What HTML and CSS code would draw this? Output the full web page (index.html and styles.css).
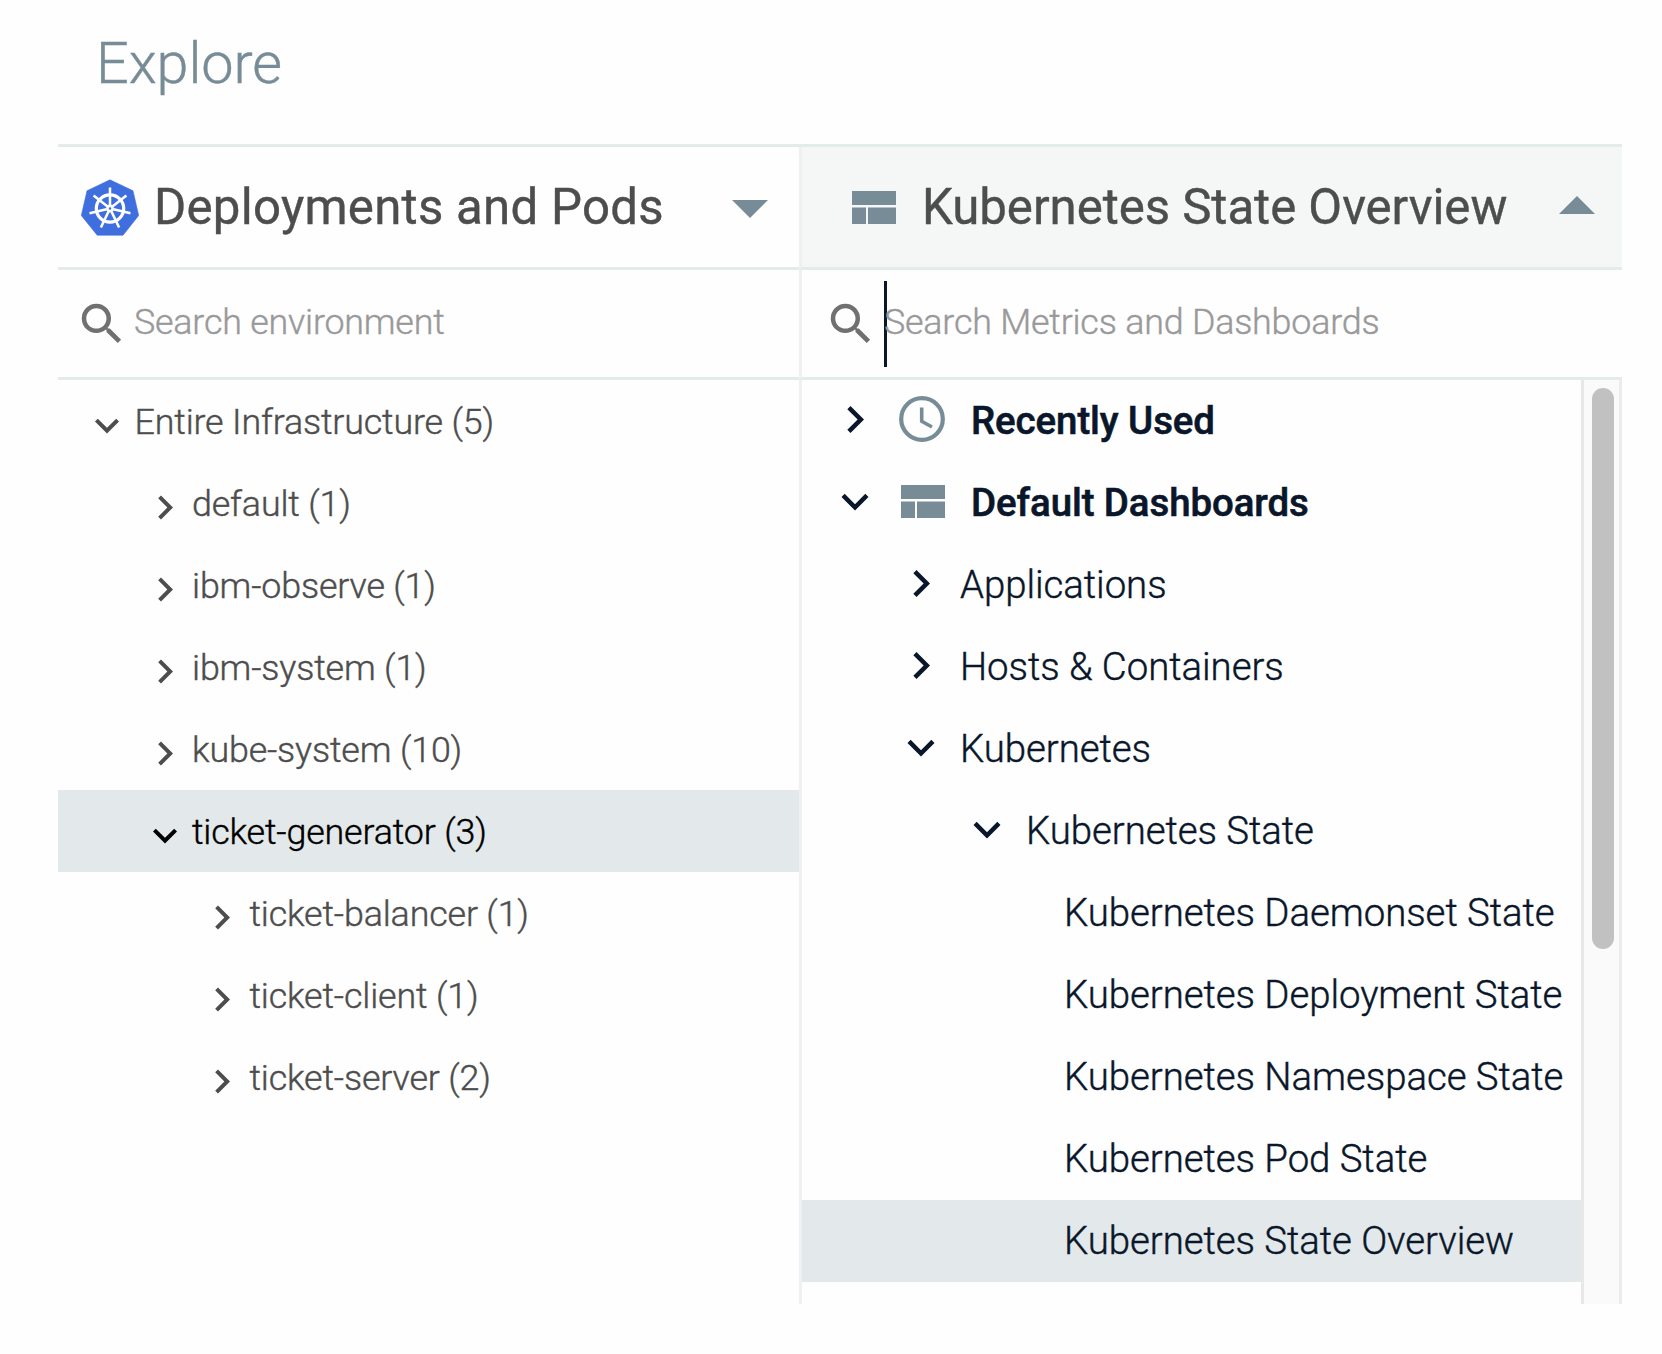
FILE: index.html
```html
<!DOCTYPE html>
<html lang="en">
<head>
<meta charset="utf-8">
<title>Explore</title>
<link rel="stylesheet" href="styles.css">
</head>
<body>
<svg class="sprite" width="0" height="0" aria-hidden="true">
  <symbol id="right" viewBox="0 0 24 24"><path d="M10 6L8.59 7.41 13.17 12l-4.58 4.59L10 18l6-6z"/></symbol>
  <symbol id="down" viewBox="0 0 24 24"><path d="M16.59 8.59L12 13.17 7.41 8.59 6 10l6 6 6-6z"/></symbol>
  <symbol id="search" viewBox="0 0 24 24"><path d="M15.5 14h-.79l-.28-.27A6.471 6.471 0 0 0 16 9.5 6.5 6.5 0 1 0 9.5 16c1.61 0 3.09-.59 4.23-1.57l.27.28v.79l5 4.99L20.49 19l-4.99-5zm-6 0C7.01 14 5 11.99 5 9.5S7.01 5 9.5 5 14 7.01 14 9.5 11.99 14 9.5 14z"/></symbol>
  <symbol id="board" viewBox="0 0 44 33"><path d="M0 0h44v14H0zM0 16.500h14v16.500H0zM16 16.500h28v16.500H16z"/></symbol>
  <symbol id="clock" viewBox="0 0 46 46"><circle cx="23" cy="23" r="20.800" fill="none" stroke="currentColor" stroke-width="4.200"/><path d="M22.700 11.500V25.300L33 31" fill="none" stroke="currentColor" stroke-width="3.600"/></symbol>
</svg>
<header class="top"><h1>Explore</h1></header>
<main class="panel">
  <section class="pane env">
    <div class="head">
      <svg class="k8s" viewBox="0 0 58 57" width="58" height="57">
        <path d="M29 .8 L52 11.800 L57.700 36.500 L42 56.200 H16.200 L.3 36.500 L6 11.800 Z" fill="#3f6fde" stroke="#3f6fde" stroke-width=".6" stroke-linejoin="round"/>
        <g fill="none" stroke="#fff" stroke-width="2.800">
          <circle cx="29" cy="29.500" r="13.700" stroke-width="3.200"/>
          <circle cx="29" cy="29.500" r="2.600" stroke-width="2.600"/>
          <g stroke-width="2.500">
            <path d="M29 26V8.500"/>
            <path d="M29 26V8.500" transform="rotate(51.430 29 29.500)"/>
            <path d="M29 26V8.500" transform="rotate(102.860 29 29.500)"/>
            <path d="M29 26V8.500" transform="rotate(154.290 29 29.500)"/>
            <path d="M29 26V8.500" transform="rotate(205.710 29 29.500)"/>
            <path d="M29 26V8.500" transform="rotate(257.140 29 29.500)"/>
            <path d="M29 26V8.500" transform="rotate(308.570 29 29.500)"/>
          </g>
        </g>
      </svg>
      <h2>Deployments and Pods</h2>
      <svg class="caret-down" viewBox="0 0 36 18" width="36" height="18"><path d="M0 0h36L18 18z"/></svg>
    </div>
    <div class="search"><svg class="mag"><use href="#search"/></svg><span>Search environment</span></div>
    <ul class="tree">
      <li class="l0"><svg><use href="#down"/></svg><span>Entire Infrastructure (5)</span></li>
      <li class="l1"><svg><use href="#right"/></svg><span>default (1)</span></li>
      <li class="l1"><svg><use href="#right"/></svg><span>ibm-observe (1)</span></li>
      <li class="l1"><svg><use href="#right"/></svg><span>ibm-system (1)</span></li>
      <li class="l1"><svg><use href="#right"/></svg><span>kube-system (10)</span></li>
      <li class="l1 selected"><svg><use href="#down"/></svg><span>ticket-generator (3)</span></li>
      <li class="l2"><svg><use href="#right"/></svg><span>ticket-balancer (1)</span></li>
      <li class="l2"><svg><use href="#right"/></svg><span>ticket-client (1)</span></li>
      <li class="l2"><svg><use href="#right"/></svg><span>ticket-server (2)</span></li>
    </ul>
  </section>
  <section class="pane metrics">
    <div class="head active">
      <svg class="board"><use href="#board"/></svg>
      <h2>Kubernetes State Overview</h2>
      <svg class="caret-up" viewBox="0 0 36 18" width="36" height="18"><path d="M0 18h36L18 0z"/></svg>
    </div>
    <div class="search"><svg class="mag"><use href="#search"/></svg><i class="cursor"></i><span>Search Metrics and Dashboards</span></div>
    <div class="scroll">
      <ul class="tree">
        <li class="l0 group"><svg><use href="#right"/></svg><svg class="clock"><use href="#clock"/></svg><span>Recently Used</span></li>
        <li class="l0 group"><svg><use href="#down"/></svg><svg class="board"><use href="#board"/></svg><span>Default Dashboards</span></li>
        <li class="l1"><svg><use href="#right"/></svg><span>Applications</span></li>
        <li class="l1"><svg><use href="#right"/></svg><span>Hosts &amp; Containers</span></li>
        <li class="l1"><svg><use href="#down"/></svg><span>Kubernetes</span></li>
        <li class="l2"><svg><use href="#down"/></svg><span>Kubernetes State</span></li>
        <li class="leaf"><span>Kubernetes Daemonset State</span></li>
        <li class="leaf"><span>Kubernetes Deployment State</span></li>
        <li class="leaf"><span>Kubernetes Namespace State</span></li>
        <li class="leaf"><span>Kubernetes Pod State</span></li>
        <li class="leaf selected"><span>Kubernetes State Overview</span></li>
      </ul>
      <div class="track"><div class="thumb"></div></div>
    </div>
  </section>
</main>
</body>
</html>
```
FILE: styles.css
```css
* { box-sizing: border-box; }
body { margin: 0; background: #fefefe; font-family: Roboto, sans-serif; font-weight: 300; color: #4d4d4d; -webkit-text-stroke: .4px; }
svg { display: block; flex: none; fill: currentColor; }
.sprite { position: absolute; }
h1, h2, ul { margin: 0; padding: 0; font-weight: inherit; }
ul { list-style: none; }
span, h1, h2 { white-space: nowrap; }

.top { height: 144px; padding: 24px 0 0 96px; }
.top h1 { font-size: 57.6px; line-height: 80px; letter-spacing: -.1px; color: #778c96; }

.panel { display: flex; width: 1564px; height: 1160px; margin-left: 58px; }
.pane { display: flex; flex-direction: column; border-top: 3px solid #e4ebeb; }
.env { width: 741px; }
.metrics { width: 823px; }
.metrics > * { border-left: 3px solid #edf1f1; }

.head { display: flex; align-items: center; height: 123px; border-bottom: 3px solid #e4ebeb; }
.head h2 { font-size: 49.15px; line-height: 60px; font-weight: 400; }
.head svg:not(.k8s) { color: #778c96; }
.env .head { padding: 0 31px 0 23px; }
.env .head h2 { margin-left: 15px; letter-spacing: .28px; }
.k8s { margin-top: 1px; }
.caret-down { margin: 3px 0 0 auto; }
.metrics .head { padding: 0 27px 0 50px; }
.metrics .head h2 { margin-left: 26px; letter-spacing: -.03px; }
.active { background: #f5f7f7; }
.board { width: 44px; height: 33px; color: #778c96; }
.caret-up { margin: 0 0 4px auto; }

.search { display: flex; align-items: center; height: 110px; border-bottom: 3px solid #e4ebeb; font-size: 35.84px; letter-spacing: -.2px; color: #999; }
.mag { width: 54px; height: 54px; color: #707070; }
.env .search { padding-left: 16.5px; }
.env .search span { margin-left: 5.5px; transform: translateY(-2px); }
.metrics .search { padding-left: 22px; }
.cursor { width: 3px; height: 86px; margin-left: 5.5px; background: #0a1629; }
.metrics .search span { margin-left: -2.5px; transform: translateY(-2px); }

.tree { flex: 1; }
.tree li { display: flex; align-items: center; height: 82px; }
.selected { background: #e3e8ea; }

.env li { font-size: 35.84px; letter-spacing: -.16px; }
.env li svg { width: 48px; height: 48px; margin-right: 3.5px; transform: translateY(4.5px); }
.env li span { transform: translateY(1px); }
.env .l0 { padding-left: 25px; }
.env .l1 { padding-left: 82.5px; }
.env .l2 { padding-left: 140px; }
.env .selected { color: #000; }

.scroll { display: flex; flex: 1; }
.metrics li { font-size: 38.4px; letter-spacing: -.06px; color: #0a1629; }
.metrics li span { transform: translateY(-1px); }
.metrics li > svg:first-child { width: 54px; height: 54px; transform: translateY(-1.5px); }
.metrics .l0 { padding-left: 26px; }
.metrics .l1 { padding-left: 92px; }
.metrics .l2 { padding-left: 158px; }
.metrics .l1 span, .metrics .l2 span { margin-left: 12px; }
.metrics .leaf { padding-left: 262px; }
.metrics .clock { width: 46px; height: 46px; margin: 0 26px 0 17px; color: #778c96; transform: translateY(-2px); }
.metrics li .board { margin: 0 26px 0 19px; transform: translateY(-2px); }
.group span { font-weight: 500; -webkit-text-stroke: .6px; }

.track { width: 41px; padding: 7.5px 0 0 8px; background: #fafafa; border-left: 3px solid #e8e8e8; border-right: 3px solid #ececec; }
.thumb { width: 22px; height: 561px; border-radius: 11px; background: #c1c1c1; }
```
